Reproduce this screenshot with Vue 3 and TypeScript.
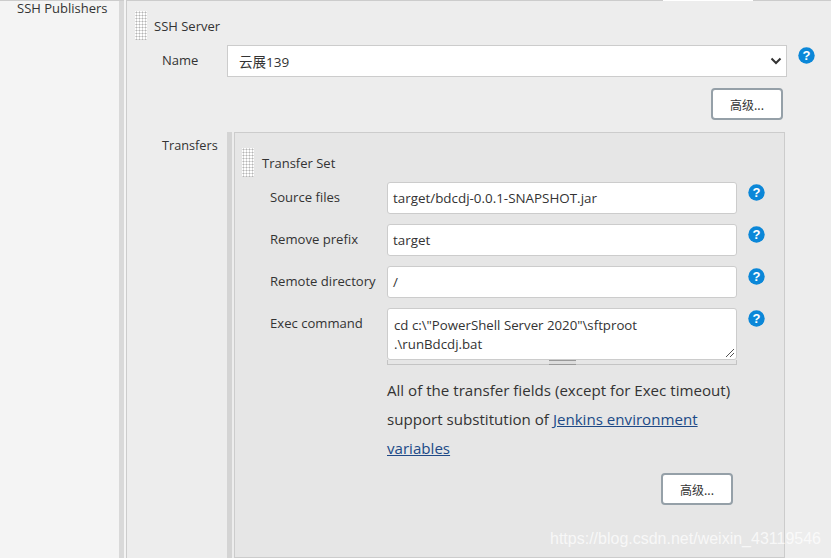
<script setup lang="ts">
interface Field { label: string; value: string }
const fields: Field[] = [
  { label: 'Source files', value: 'target/bdcdj-0.0.1-SNAPSHOT.jar' },
  { label: 'Remove prefix', value: 'target' },
  { label: 'Remote directory', value: '/' },
]
</script>

<template>
  <div class="page">
    <aside class="side">SSH Publishers</aside>
    <div class="bar"></div>
    <main class="panel">
      <div class="tabline"><span class="tabgap"></span></div>
      <div class="head head-outer">
        <span class="grip"></span>
        <span class="title">SSH Server</span>
      </div>
      <div class="name-row">
        <span class="lbl name-lbl">Name</span>
        <div class="select">
          <span>云展139</span>
          <svg class="chev" width="12" height="8" viewBox="0 0 12 8"><path d="M1.5 1.5 6 6l4.5-4.5" fill="none" stroke="#333" stroke-width="2"/></svg>
        </div>
        <svg class="help help-top" width="17" height="17" viewBox="0 0 17 17"><circle cx="8.5" cy="8.5" r="8.2" fill="#0b87d8"/><text x="8.5" y="13" text-anchor="middle" class="q">?</text></svg>
      </div>
      <div class="adv-row"><button class="btn">高级...</button></div>
      <div class="transfers">
        <span class="lbl tr-lbl">Transfers</span>
        <div class="tr-bar"></div>
        <section class="box">
          <div class="head head-inner">
            <span class="grip"></span>
            <span class="title">Transfer Set</span>
          </div>
          <div v-for="f in fields" :key="f.label" class="frow">
            <span class="lbl flbl">{{ f.label }}</span>
            <div class="input">{{ f.value }}</div>
            <svg class="help" width="17" height="17" viewBox="0 0 17 17"><circle cx="8.5" cy="8.5" r="8.2" fill="#0b87d8"/><text x="8.5" y="13" text-anchor="middle" class="q">?</text></svg>
          </div>
          <div class="frow ex">
            <span class="lbl flbl">Exec command</span>
            <div class="ta-wrap">
              <div class="input ta">
                <div>cd c:\"PowerShell Server 2020"\sftproot</div>
                <div>.\runBdcdj.bat</div>
                <svg class="resize" width="10" height="10" viewBox="0 0 10 10"><path d="M1 9 9 1M5 9l4-4" stroke="#555" stroke-width="1"/></svg>
              </div>
              <div class="grab"><span class="grab-mark"></span></div>
            </div>
            <svg class="help" width="17" height="17" viewBox="0 0 17 17"><circle cx="8.5" cy="8.5" r="8.2" fill="#0b87d8"/><text x="8.5" y="13" text-anchor="middle" class="q">?</text></svg>
          </div>
          <p class="note">All of the transfer fields (except for Exec timeout) support substitution of <a href="#" class="link">Jenkins environment variables</a></p>
          <div class="adv-row2"><button class="btn">高级...</button></div>
        </section>
      </div>
    </main>
    <div class="mark">https://blog.csdn.net/weixin_43119546</div>
  </div>
</template>

<style scoped>
.page {
  position: relative;
  display: flex;
  width: 831px;
  height: 558px;
  overflow: hidden;
  background: #f4f4f4;
  color: #333;
  font-family: "Open Sans", "Noto Sans CJK SC", sans-serif;
  font-size: 13px;
}
.side {
  width: 119px;
  padding: 0 0 0 17px;
  box-sizing: border-box;
  border-top: 1px solid #ccc;
  line-height: 15px;
  flex: none;
}
.bar { width: 5px; background: #d9d9d9; flex: none; border-top: 1px solid #ccc; }
.panel {
  flex: 1;
  margin-left: 2px;
  border-left: 1px solid #ccc;
  background: #ededed;
  display: flex;
  flex-direction: column;
  min-width: 0;
}
.tabline { height: 1px; background: #ccc; position: relative; flex: none; }
.tabgap { position: absolute; left: 536px; width: 90px; height: 1px; background: #fff; }
.head { display: flex; align-items: center; }
.head-outer { margin: 10px 0 0 8px; height: 29px; }
.grip {
  width: 12px;
  height: 29px;
  flex: none;
  background-color: #fff;
  background-image: radial-gradient(#b4b4b4 0.9px, transparent 1.1px);
  background-size: 3px 3px;
}
.title { margin-left: 8px; line-height: 29px; position: relative; top: 1px; }
.head-outer .title { margin-left: 7px; }
.lbl { white-space: nowrap; }
.name-row { display: flex; margin: 5px 0 0 35px; align-items: flex-start; }
.name-lbl { width: 65px; line-height: 20px; margin-top: 5px; }
.select {
  width: 560px;
  height: 32px;
  box-sizing: border-box;
  border: 1px solid #ccc;
  background: #fff;
  display: flex;
  align-items: center;
  justify-content: space-between;
  padding: 0 4px 0 11px;
  font-size: 13.5px;
  flex: none;
}
.help { flex: none; margin: 2px 0 0 11px; }
.q { font: bold 13px "Liberation Sans", sans-serif; fill: #fff; }
.adv-row { display: flex; margin: 11px 0 0 584px; }
.btn {
  width: 72px;
  height: 32px;
  box-sizing: border-box;
  border: 2px solid #95a0a8;
  border-radius: 4px;
  background: #fff;
  color: #333;
  font: 12px "Noto Sans CJK SC", "Open Sans", sans-serif;
  padding: 0;
}
.transfers { display: flex; margin: 12px 0 0 35px; flex: 1; min-height: 0; }
.tr-lbl { width: 65px; line-height: 20px; margin-top: 3px; flex: none; font-size: 12.7px; }
.tr-bar { width: 5px; background: #d4d4d4; flex: none; }
.box {
  margin-left: 2px;
  width: 551px;
  box-sizing: border-box;
  border: 1px solid #ccc;
  background: #e6e6e6;
  padding: 15px 0 0 7px;
  display: flex;
  flex-direction: column;
}
.frow { display: flex; align-items: flex-start; margin-left: 28px; height: 32px; margin-top: 10px; }
.head-inner + .frow { margin-top: 5px; }
.flbl { width: 117px; line-height: 20px; margin-top: 5px; flex: none; font-size: 13.1px; }
.input {
  width: 350px;
  height: 32px;
  box-sizing: border-box;
  border: 1px solid #ccc;
  border-radius: 3px;
  background: #fff;
  padding: 0 5px;
  line-height: 30px;
  flex: none;
  font-size: 13.4px;
}
.frow.ex { height: 57px; }
.ta-wrap { width: 350px; flex: none; }
.ta { height: 52px; line-height: 19px; padding: 7px 6px 0; position: relative; font-size: 13.25px; }
.resize { position: absolute; right: 1px; bottom: 1px; }
.grab {
  height: 5px;
  box-sizing: border-box;
  border: 1px solid #c4c4c4;
  border-top: none;
  display: flex;
  justify-content: center;
}
.grab-mark { width: 27px; height: 3px; border-top: 1px solid #999; border-bottom: 1px solid #999; background: #ddd; }
.note {
  margin: 11px 0 0 145px;
  width: 350px;
  font-size: 15.12px;
  line-height: 29px;
}
.link { color: #204a87; text-decoration: underline; }
.adv-row2 { display: flex; margin: 10px 0 0 419px; }
.mark {
  position: absolute;
  left: 550px;
  top: 529px;
  color: rgba(255, 255, 255, 0.72);
  font: 16px/20px "Liberation Sans", sans-serif;
  white-space: nowrap;
}
</style>
